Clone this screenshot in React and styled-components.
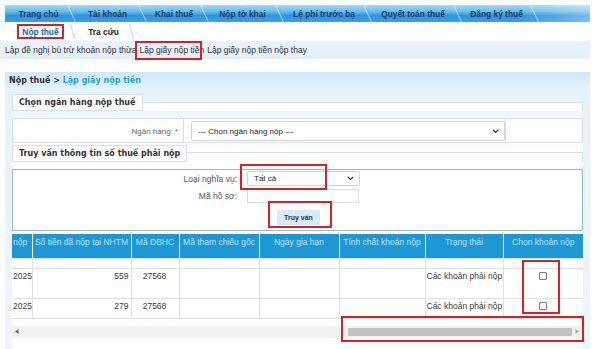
import React from "react";
import styled, { createGlobalStyle } from "styled-components";

const GlobalStyle = createGlobalStyle`
  html, body { margin: 0; padding: 0; background: #fff; }
  body { font-family: "Liberation Sans", Arial, sans-serif; color: #333; }
  * { box-sizing: border-box; }
`;

const Page = styled.div`
  position: relative;
  width: 600px;
  height: 349px;
  overflow: hidden;
  padding-top: 5px;
  background: #fff;
`;

const NavBar = styled.nav`
  display: flex;
  margin-left: 5px;
  width: 585px;
  height: 17px;
  background:
    linear-gradient(to right, rgba(255,255,255,0) 88%, rgba(255,255,255,0.35) 100%),
    linear-gradient(to bottom, #a3dbf7 0%, #62bcee 40%, #2f94dc 62%, #3d9fe2 100%);
`;

const NavItem = styled.div`
  position: relative;
  flex: 0 0 ${(p) => p.$w}px;
  display: flex;
  align-items: center;
  justify-content: center;
  font: bold 8.4px "Liberation Sans", Arial, sans-serif;
  color: #1d3b6a;
  white-space: nowrap;
  &::after {
    content: "";
    position: absolute;
    right: 0;
    top: 0;
    bottom: 0;
    width: 1px;
    background: rgba(255, 255, 255, 0.6);
    transform: skewX(25deg);
  }
`;

const SubTabs = styled.div`
  display: flex;
  height: 15px;
  margin-top: 2px;
  padding-left: 17px;
`;

const SubTab = styled.div`
  flex: 0 0 47px;
  display: flex;
  align-items: center;
  justify-content: center;
  font: bold 8.4px "Liberation Sans", Arial, sans-serif;
  color: ${(p) => (p.$active ? "#1a6bb5" : "#222")};
  background: ${(p) => (p.$active ? "#f4f8fb" : "transparent")};
`;

const Slash = styled.span`
  position: relative;
  flex: 0 0 ${(p) => p.$w}px;
  &::before {
    content: "";
    position: absolute;
    left: 50%;
    top: 0;
    bottom: 0;
    width: 1px;
    background: #b9d9ee;
    transform: skewX(15deg);
  }
`;

const ActionBar = styled.div`
  display: flex;
  align-items: center;
  gap: 3px;
  margin-top: 2px;
  width: 590px;
  height: 18px;
  padding-left: 5px;
  background: linear-gradient(to bottom, #eaf3fb, #e2eef8);
  font-size: 8.5px;
  color: #333;
  white-space: nowrap;
`;

const ActionLink = styled.span`
  color: #333;
`;

const Panel = styled.section`
  margin: 13px 0 0 5px;
  width: 585px;
  height: 277px;
  background: #e8f3fa;
`;

const Crumb = styled.div`
  display: flex;
  align-items: center;
  height: 16px;
  padding-left: 4px;
  background: linear-gradient(to bottom, #cfe8f8, #e2f1fb);
  font: bold 8px "DejaVu Sans", Verdana, sans-serif;
  color: #333;
  white-space: pre;
`;

const CrumbLink = styled.span`
  color: #2a9fd8;
`;

const Body = styled.div`
  padding: 6px 7px 0;
  height: 261px;
  background: linear-gradient(to bottom, #e6f2fa 0, #eef6fc 100%);
`;

const Inner = styled.div`
  height: 100%;
  background: linear-gradient(to bottom, rgba(255,255,255,0) 0, #fff 60px);
`;

const SectionHead = styled.div`
  display: flex;
  height: 17px;
  margin-top: ${(p) => p.$top || 0}px;
`;

const Legend = styled.div`
  height: 17px;
  padding: 0 6px;
  border: 1px solid #d3e1ea;
  background: #fff;
  font: bold 8px "DejaVu Sans", Verdana, sans-serif;
  line-height: 15px;
  color: #333;
  white-space: nowrap;
`;

const Rule = styled.div`
  flex: 1;
  margin-top: ${(p) => p.$top}px;
  border-top: 1px solid #d3e1ea;
  border-right: 1px solid #d3e1ea;
  background: #fff;
`;

const BankRow = styled.div`
  display: grid;
  grid-template-columns: 171px 322px 1fr;
  height: 25px;
  margin-top: 7px;
  border: 1px solid #d3e1ea;
  background: #fff;
`;

const LabelCell = styled.div`
  display: flex;
  align-items: center;
  justify-content: flex-end;
  padding-right: 5px;
  border-right: 1px solid #d3e1ea;
  font-size: 8px;
  color: #666;
`;

const Star = styled.span`
  color: #e5333a;
  margin-left: 2px;
`;

const SelectCell = styled.div`
  padding: 2px 0 2px 7px;
  border-right: 1px solid #d3e1ea;
`;

const FakeSelect = styled.div`
  display: flex;
  align-items: center;
  justify-content: space-between;
  width: ${(p) => p.$w || "100%"};
  height: ${(p) => p.$h || 20}px;
  padding: 0 5px 0 6px;
  border: 1px solid #d2d2d2;
  border-radius: 2px;
  background: #fff;
  font-size: 8px;
  color: #222;
`;

const QueryBox = styled.div`
  display: grid;
  grid-template-columns: 224px 113px;
  column-gap: 10px;
  row-gap: 3px;
  align-items: center;
  margin-top: 7px;
  padding: 1px 0 5px;
  border: 1px solid #9fb8c7;
  background: #fff;
`;

const FieldLabel = styled.div`
  text-align: right;
  font-size: 8.5px;
  color: #555;
`;

const TextInput = styled.div`
  width: 112px;
  height: 14px;
  border: 1px solid #dcdcdc;
  background: #fff;
`;

const QueryButton = styled.button`
  width: 43px;
  height: 15px;
  margin: 2px 0 0 30px;
  padding: 0;
  border: none;
  border-radius: 1px;
  background: #d8eaf8;
  font: bold 7px "Liberation Sans", Arial, sans-serif;
  color: #333;
`;

const TableWrap = styled.div`
  margin-top: 3px;
  width: 571px;
  overflow: hidden;
  background: #fff;
`;

const Table = styled.table`
  width: 571px;
  table-layout: fixed;
  border-collapse: collapse;
  font-size: 8.5px;
`;

const Th = styled.th`
  height: 24px;
  padding: 3px 1px 0;
  vertical-align: top;
  background: #1d98d6;
  color: #bfe2f5;
  font-weight: normal;
  text-align: center;
  white-space: nowrap;
  overflow: hidden;
  border-left: 1px solid rgba(255, 255, 255, 0.75);
  &:first-child {
    border-left: none;
    text-align: left;
    padding-left: 1px;
  }
`;

const Td = styled.td`
  height: ${(p) => p.$h}px;
  padding: 2px 2px 0 1px;
  vertical-align: top;
  border: 1px solid #e0e0e0;
  text-align: ${(p) => p.$align || "left"};
  color: #3a3a3a;
  white-space: nowrap;
  overflow: hidden;
  line-height: 11px;
  &:first-child {
    border-left: none;
  }
`;

const Check = styled.span`
  display: inline-block;
  width: 8px;
  height: 8px;
  margin-top: 1px;
  border: 1px solid #777;
  border-radius: 1px;
  background: #fff;
`;

const ScrollTrack = styled.div`
  display: flex;
  align-items: center;
  margin-top: 7px;
  width: 571px;
  height: 12px;
  background: #f1f1f1;
`;

const Arrow = styled.span`
  flex: 0 0 10px;
  display: flex;
  align-items: center;
  justify-content: center;
`;

const Thumb = styled.span`
  flex: 0 0 ${(p) => p.$w}px;
  height: 8px;
  margin-left: ${(p) => p.$left}px;
  border-radius: 1px;
  background: #c1c1c1;
`;

const Mark = styled.div`
  position: absolute;
  left: ${(p) => p.$x}px;
  top: ${(p) => p.$y}px;
  width: ${(p) => p.$w}px;
  height: ${(p) => p.$h}px;
  border: 2px solid #dc1f27;
  pointer-events: none;
`;

const Chevron = () => (
  <svg width="7" height="5" viewBox="0 0 7 5">
    <path d="M1 1l2.5 2.5L6 1" fill="none" stroke="#333" strokeWidth="1.2" />
  </svg>
);

const navItems = [
  ["Trang chủ", 67],
  ["Tài khoản", 71],
  ["Khai thuế", 62],
  ["Nộp tờ khai", 75],
  ["Lệ phí trước bạ", 88],
  ["Quyết toán thuế", 90],
  ["Đăng ký thuế", 77],
];

const columns = [
  ["nộp", 20],
  ["Số tiền đã nộp tại NHTM", 99],
  ["Mã ĐBHC", 48],
  ["Mã tham chiếu gốc", 80],
  ["Ngày gia hạn", 80],
  ["Tính chất khoản nộp", 86],
  ["Trạng thái", 78],
  ["Chọn khoản nộp", 80],
];

const rows = [
  { year: "2025", amount: "559", code: "27568", h: 30 },
  { year: "2025", amount: "279", code: "27568", h: 20 },
];

export default function App() {
  return (
    <Page>
      <GlobalStyle />
      <NavBar>
        {navItems.map(([label, w]) => (
          <NavItem key={label} $w={w}>
            {label}
          </NavItem>
        ))}
      </NavBar>

      <SubTabs>
        <SubTab $active>Nộp thuế</SubTab>
        <Slash $w={16} />
        <SubTab>Tra cứu</SubTab>
        <Slash $w={8} />
      </SubTabs>

      <ActionBar>
        <ActionLink>Lập đề nghị bù trừ khoản nộp thừa</ActionLink>
        <ActionLink>Lập giấy nộp tiền</ActionLink>
        <ActionLink>Lập giấy nộp tiền nộp thay</ActionLink>
      </ActionBar>

      <Panel>
        <Crumb>
          {"Nộp thuế > "}
          <CrumbLink>Lập giấy nộp tiền</CrumbLink>
        </Crumb>
        <Body>
          <Inner>
            <SectionHead>
              <Legend>Chọn ngân hàng nộp thuế</Legend>
              <Rule $top={8} />
            </SectionHead>
            <BankRow>
              <LabelCell>
                Ngân hàng:<Star>*</Star>
              </LabelCell>
              <SelectCell>
                <FakeSelect>
                  <span>--- Chọn ngân hàng nộp ---</span>
                  <Chevron />
                </FakeSelect>
              </SelectCell>
              <div />
            </BankRow>

            <SectionHead $top={2}>
              <Legend>Truy vấn thông tin số thuế phải nộp</Legend>
              <Rule $top={7} />
            </SectionHead>
            <QueryBox>
              <FieldLabel>Loại nghĩa vụ:</FieldLabel>
              <FakeSelect $h={15} $w="113px">
                <span>Tất cả</span>
                <Chevron />
              </FakeSelect>
              <FieldLabel>Mã hồ sơ:</FieldLabel>
              <TextInput />
              <div />
              <div>
                <QueryButton type="button">Truy vấn</QueryButton>
              </div>
            </QueryBox>

            <TableWrap>
              <Table>
                <colgroup>
                  {columns.map(([label, w]) => (
                    <col key={label} style={{ width: w }} />
                  ))}
                </colgroup>
                <thead>
                  <tr>
                    {columns.map(([label]) => (
                      <Th key={label}>{label}</Th>
                    ))}
                  </tr>
                </thead>
                <tbody>
                  <tr>
                    {columns.map(([label]) => (
                      <Td key={label} $h={10} />
                    ))}
                  </tr>
                  {rows.map((r, i) => (
                    <tr key={i}>
                      <Td $h={r.h}>{r.year}</Td>
                      <Td $h={r.h} $align="right">{r.amount}</Td>
                      <Td $h={r.h} $align="center">{r.code}</Td>
                      <Td $h={r.h} />
                      <Td $h={r.h} />
                      <Td $h={r.h} />
                      <Td $h={r.h}>Các khoản phải nộp</Td>
                      <Td $h={r.h} $align="center">
                        <Check />
                      </Td>
                    </tr>
                  ))}
                </tbody>
              </Table>
            </TableWrap>

            <ScrollTrack>
              <Arrow>
                <svg width="4" height="5" viewBox="0 0 4 5">
                  <path d="M3.5 0v5L0 2.5z" fill="#666" />
                </svg>
              </Arrow>
              <Thumb $left={326} $w={224} />
              <Arrow>
                <svg width="4" height="5" viewBox="0 0 4 5">
                  <path d="M0.5 0v5L4 2.5z" fill="#aaa" />
                </svg>
              </Arrow>
            </ScrollTrack>
          </Inner>
        </Body>
      </Panel>

      <Mark $x={17} $y={24} $w={47} $h={15} />
      <Mark $x={135} $y={41} $w={67} $h={19} />
      <Mark $x={240} $y={164} $w={87} $h={26} />
      <Mark $x={268} $y={201} $w={64} $h={27} />
      <Mark $x={522} $y={260} $w={38} $h={54} />
      <Mark $x={341} $y={316} $w={243} $h={26} />
    </Page>
  );
}
